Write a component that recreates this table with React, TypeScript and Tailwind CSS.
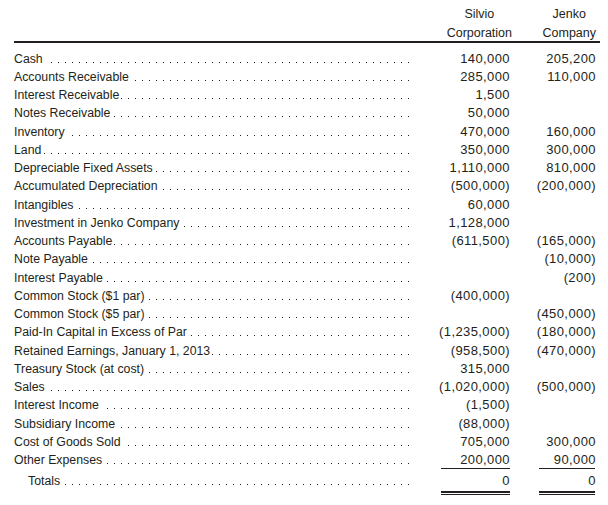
import React from "react";

const rows: [string, string, string][] = [
  ["Cash", "140,000", "205,200"],
  ["Accounts Receivable", "285,000", "110,000"],
  ["Interest Receivable", "1,500", ""],
  ["Notes Receivable", "50,000", ""],
  ["Inventory", "470,000", "160,000"],
  ["Land", "350,000", "300,000"],
  ["Depreciable Fixed Assets", "1,110,000", "810,000"],
  ["Accumulated Depreciation", "(500,000)", "(200,000)"],
  ["Intangibles", "60,000", ""],
  ["Investment in Jenko Company", "1,128,000", ""],
  ["Accounts Payable", "(611,500)", "(165,000)"],
  ["Note Payable", "", "(10,000)"],
  ["Interest Payable", "", "(200)"],
  ["Common Stock ($1 par)", "(400,000)", ""],
  ["Common Stock ($5 par)", "", "(450,000)"],
  ["Paid-In Capital in Excess of Par", "(1,235,000)", "(180,000)"],
  ["Retained Earnings, January 1, 2013", "(958,500)", "(470,000)"],
  ["Treasury Stock (at cost)", "315,000", ""],
  ["Sales", "(1,020,000)", "(500,000)"],
  ["Interest Income", "(1,500)", ""],
  ["Subsidiary Income", "(88,000)", ""],
  ["Cost of Goods Sold", "705,000", "300,000"],
  ["Other Expenses", "200,000", "90,000"],
];

function Row({ label, a, b, indent }: { label: string; a: string; b: string; indent?: boolean }) {
  return (
    <div className="flex h-[18.26px] leading-[18.26px]">
      <div className="w-[396px] flex bg-[linear-gradient(to_right,#231f20_1.4px,transparent_1.4px)] bg-[length:7px_1.4px] bg-repeat-x bg-[position:2px_12px]">
        <span className={`bg-white pr-[2px] text-[12.3px] ${indent ? "pl-[14px]" : ""}`}>{label}</span>
      </div>
      <div className="w-[100px] text-right text-[13px] tracking-[0.4px]">{a}</div>
      <div className="w-[86px] text-right text-[13px] tracking-[0.4px]">{b}</div>
    </div>
  );
}

export default function App() {
  return (
    <div className="w-[608px] h-[505px] bg-white text-[#231f20] pl-[14px] font-['Liberation_Sans',Arial,sans-serif] overflow-hidden">
      <div className="flex pt-[6px]">
        <div className="w-[396px]" />
        <div className="w-[100px] flex justify-end">
          <div className="flex flex-col items-center mr-[-2px] text-[12.5px]">
            <div className="h-[16px] leading-[16px]">Silvio</div>
            <div className="h-[16px] leading-[16px] mt-[3px]">Corporation</div>
          </div>
        </div>
        <div className="w-[86px] flex justify-end">
          <div className="flex flex-col items-center text-[12.5px]">
            <div className="h-[16px] leading-[16px]">Jenko</div>
            <div className="h-[16px] leading-[16px] mt-[3px]">Company</div>
          </div>
        </div>
      </div>
      <div className="w-[586px] h-[1.5px] bg-[#231f20]" />
      <div className="h-[7px]" />
      {rows.map(([l, a, b]) => (
        <Row key={l} label={l} a={a} b={b} />
      ))}
      <div className="flex h-[1px] -mt-[1px]">
        <div className="w-[396px]" />
        <div className="w-[100px] flex justify-end">
          <div className="w-[69px] h-[1px] bg-[#231f20]" />
        </div>
        <div className="w-[86px] flex justify-end pr-[1px]">
          <div className="w-[56px] h-[1px] bg-[#231f20]" />
        </div>
      </div>
      <div className="h-[3px]" />
      <Row label="Totals" a="0" b="0" indent />
      <div className="flex">
        <div className="w-[396px]" />
        <div className="w-[100px] flex justify-end">
          <div className="w-[69px] flex flex-col">
            <div className="h-[2px] bg-[#231f20]" />
            <div className="h-[1.5px]" />
            <div className="h-[1px] bg-[#231f20]" />
          </div>
        </div>
        <div className="w-[86px] flex justify-end pr-[1px]">
          <div className="w-[56px] flex flex-col">
            <div className="h-[2px] bg-[#231f20]" />
            <div className="h-[1.5px]" />
            <div className="h-[1px] bg-[#231f20]" />
          </div>
        </div>
      </div>
    </div>
  );
}
